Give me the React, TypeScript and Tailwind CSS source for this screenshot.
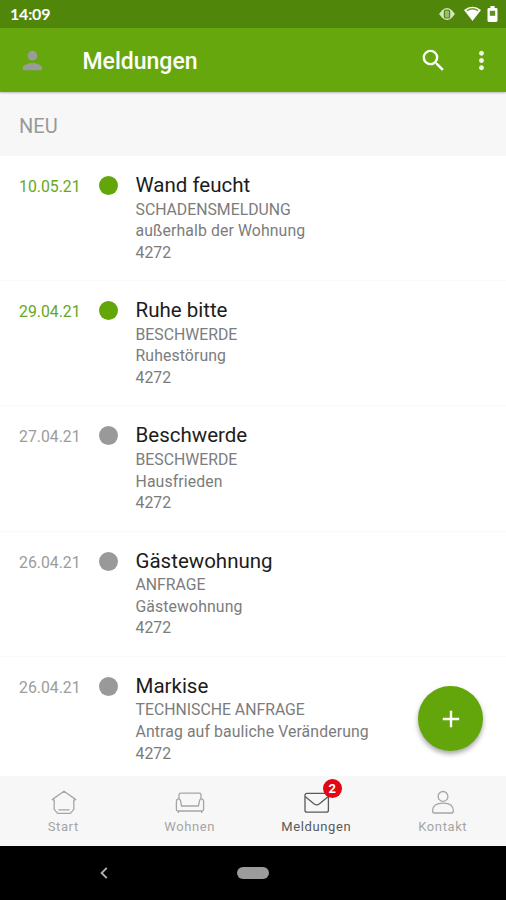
import type { ReactNode } from "react";
import clsx from "clsx";
import { MdMoreVert, MdPerson, MdSearch } from "react-icons/md";

interface Message {
  id: number;
  date: string;
  title: string;
  category: string;
  description: string;
  unit: string;
  unread: boolean;
}

const MESSAGES: Message[] = [
  {
    id: 1,
    date: "10.05.21",
    title: "Wand feucht",
    category: "SCHADENSMELDUNG",
    description: "außerhalb der Wohnung",
    unit: "4272",
    unread: true,
  },
  {
    id: 2,
    date: "29.04.21",
    title: "Ruhe bitte",
    category: "BESCHWERDE",
    description: "Ruhestörung",
    unit: "4272",
    unread: true,
  },
  {
    id: 3,
    date: "27.04.21",
    title: "Beschwerde",
    category: "BESCHWERDE",
    description: "Hausfrieden",
    unit: "4272",
    unread: false,
  },
  {
    id: 4,
    date: "26.04.21",
    title: "Gästewohnung",
    category: "ANFRAGE",
    description: "Gästewohnung",
    unit: "4272",
    unread: false,
  },
  {
    id: 5,
    date: "26.04.21",
    title: "Markise",
    category: "TECHNISCHE ANFRAGE",
    description: "Antrag auf bauliche Veränderung",
    unit: "4272",
    unread: false,
  },
];

function StatusBar() {
  return (
    <div className="flex h-7 shrink-0 items-center bg-[#50870b] pl-[10px] pr-2 text-white">
      <span className="flex-1 font-[Lato,sans-serif] text-[16px] font-bold leading-none tracking-[-0.2px]">
        14:09
      </span>
      <svg width="16" height="14" viewBox="0 0 16 14" className="mr-[9px]">
        <path
          d="M0 7 L3.2 3.2 Q8 -1.2 12.8 3.2 L16 7 L12.8 10.8 Q8 15.2 3.2 10.8 Z"
          fill="#d5e5bf"
        />
        <rect x="5.4" y="3" width="5.2" height="8" rx="1.6" fill="#9bbb70" stroke="#50870b" strokeWidth="1.2" />
      </svg>
      <svg width="17" height="16" viewBox="0 0 17 16" className="mr-[6px]">
        <path d="M0 4 Q8.5 -2.6 17 4 L8.5 15 Z" fill="#fff" />
        <path d="M3 4.6 Q8.5 1 14 4.6" fill="none" stroke="#6d9c35" strokeWidth="1.5" />
      </svg>
      <svg width="11" height="16" viewBox="0 0 11 16">
        <path
          d="M3.4 0 H7.6 V2 H9.2 Q10.5 2 10.5 3.3 V14.6 Q10.5 16 9.2 16 H1.8 Q0.5 16 0.5 14.6 V3.3 Q0.5 2 1.8 2 H3.4 Z"
          fill="#fff"
        />
        <rect x="2.8" y="4.8" width="5.4" height="5" fill="#5f9120" />
      </svg>
    </div>
  );
}

function AppBar() {
  return (
    <header className="z-10 flex h-16 shrink-0 items-center bg-[#65a70d] pl-[18px] pr-[10px] text-white shadow-[0_1px_2px_rgba(0,0,0,0.25)]">
      <MdPerson size={29} className="text-[#999c97]" />
      <h1 className="ml-[35.5px] flex-1 pt-[2px] text-[23px] font-medium leading-none">
        Meldungen
      </h1>
      <MdSearch size={29} />
      <MdMoreVert size={29} className="ml-[19px] text-[#eef5e4]" />
    </header>
  );
}

function MessageRow({ message }: { message: Message }) {
  return (
    <li className="flex h-[125.2px] shrink-0 border-b border-[#fafafa] pl-[19px]">
      <span
        className={clsx(
          "mt-5 w-[79.5px] text-[15.8px] leading-[22px]",
          message.unread ? "text-[#65a824]" : "text-[#9c9c9c]",
        )}
      >
        {message.date}
      </span>
      <span
        className={clsx(
          "mt-5 size-[19px] rounded-full",
          message.unread ? "bg-[#62a60a]" : "bg-[#999999]",
        )}
      />
      <div className="ml-[18px] mt-[17px] text-[15.8px] leading-[21.7px] text-[#7c7c7c]">
        <h2 className="mb-[0.5px] text-[20.5px] leading-[25px] text-[#1c1c1c]">
          {message.title}
        </h2>
        <p>{message.category}</p>
        <p className="tracking-[0.11px]">{message.description}</p>
        <p>{message.unit}</p>
      </div>
    </li>
  );
}

interface NavItemProps {
  label: string;
  active?: boolean;
  badge?: number;
  children: ReactNode;
}

function NavItem({ label, active, badge, children }: NavItemProps) {
  return (
    <button
      type="button"
      className={clsx(
        "flex flex-1 flex-col items-center pt-[13px]",
        active ? "text-[#5a5a5a]" : "text-[#a5a5a5]",
      )}
    >
      <span className="relative left-[0.5px]">
        <svg
          width="30"
          height="28"
          viewBox="0 0 30 28"
          fill="none"
          stroke="currentColor"
          strokeWidth="1.3"
          strokeLinecap="round"
          strokeLinejoin="round"
        >
          {children}
        </svg>
        {badge !== undefined && (
          <span className="absolute -top-[10px] left-[21px] flex size-[19px] items-center justify-center rounded-full bg-[#e30613] text-[13px] font-bold leading-none text-white">
            {badge}
          </span>
        )}
      </span>
      <span className="mt-[2px] text-[13px] leading-4 tracking-[0.6px]">
        {label}
      </span>
    </button>
  );
}

function BottomNav() {
  return (
    <nav className="flex h-[70px] shrink-0 bg-[#f7f7f7]">
      <NavItem label="Start">
        <path d="M5.2 11.2 L3.2 10.6 L15 2.2 L26.8 10.6 L24.8 11.2 V20.4 L21.4 24.4 H8.6 L5.2 20.4 V11.2 M9.8 20.8 H20.2" />
      </NavItem>
      <NavItem label="Wohnen">
        <path d="M4 9.4 V6 Q4 4.2 5.8 4.2 H24.2 Q26 4.2 26 6 V9.4" />
        <path d="M6.6 17 L5.4 11.4 Q4 8.8 2 10.6 Q1.4 11.4 1.4 13 V20.6 Q1.4 22 2.8 22 H27.2 Q28.6 22 28.6 20.6 V13 Q28.6 11.4 28 10.6 Q26 8.8 24.6 11.4 L23.4 17 Z M3.4 22.2 V23.4 M26.6 22.2 V23.4" />
      </NavItem>
      <NavItem label="Meldungen" active badge={2}>
        <rect x="3" y="4.4" width="23.4" height="18.8" rx="2" />
        <path d="M3.4 7.8 L12.2 15 Q14.7 16.8 17.2 15 L26 7.8" />
      </NavItem>
      <NavItem label="Kontakt">
        <circle cx="15" cy="7.4" r="4.9" />
        <path d="M4.6 22 Q4.6 14.2 15 14.2 Q25.4 14.2 25.4 22 Q25.4 24 23.4 24 H6.6 Q4.6 24 4.6 22 Z" />
      </NavItem>
    </nav>
  );
}

function SystemNav() {
  return (
    <div className="grid h-[54px] shrink-0 grid-cols-[1fr_32px_1fr] items-center bg-black">
      <svg width="8" height="12" viewBox="0 0 8 12" className="ml-[100px]">
        <path d="M6.8 0.8 L1.6 6 L6.8 11.2" fill="none" stroke="#b4b4b4" strokeWidth="1.8" />
      </svg>
      <span className="h-3 rounded-full bg-[#9c9c9c]" />
    </div>
  );
}

export default function App() {
  return (
    <div className="flex h-[900px] w-[506px] flex-col overflow-hidden bg-white font-[Roboto,sans-serif]">
      <StatusBar />
      <AppBar />
      <h2 className="flex h-16 shrink-0 items-center bg-[#f7f7f7] pl-[19px] pt-[3px] text-[20px] leading-none text-[#999999]">
        NEU
      </h2>
      <main className="relative min-h-0 flex-1">
        <ul className="flex h-full flex-col overflow-hidden">
          {MESSAGES.map((message) => (
            <MessageRow key={message.id} message={message} />
          ))}
        </ul>
        <button
          type="button"
          aria-label="Neue Meldung"
          className="absolute bottom-[25px] right-[23px] flex size-[65px] items-center justify-center rounded-full bg-[#62a60b] shadow-[0_3px_5px_rgba(0,0,0,0.35)]"
        >
          <svg width="18" height="18" viewBox="0 0 18 18" stroke="#fff" strokeWidth="2.4">
            <path d="M9 0.8 V17.2 M0.8 9 H17.2" />
          </svg>
        </button>
      </main>
      <BottomNav />
      <SystemNav />
    </div>
  );
}
